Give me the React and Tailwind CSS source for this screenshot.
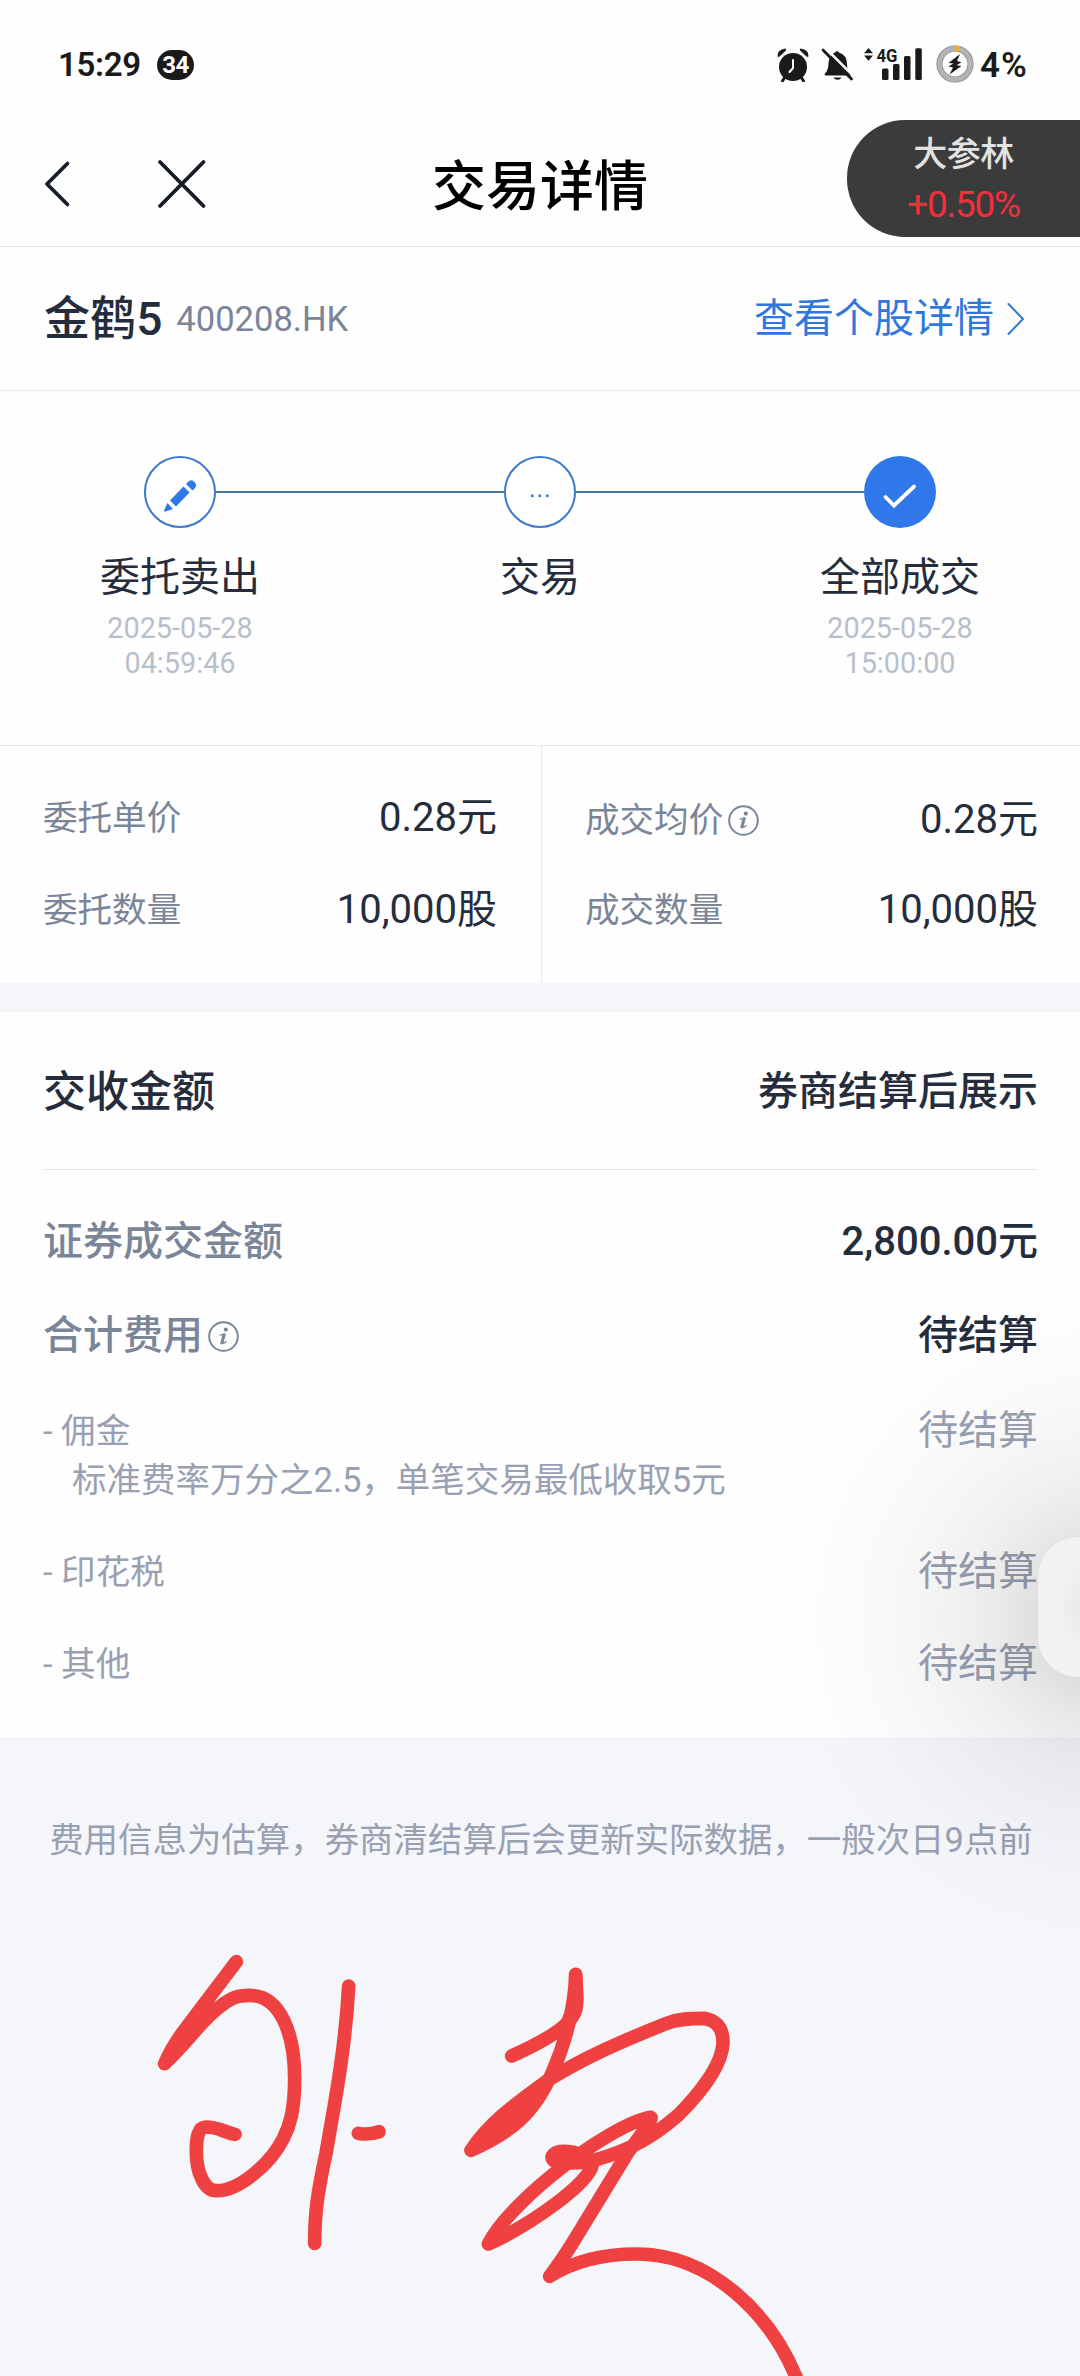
import React from 'react';

const steps = [
    { label: '委托卖出', icon: 'pencil', date: '2025-05-28', time: '04:59:46' },
    { label: '交易', icon: 'dots' },
    { label: '全部成交', icon: 'check', date: '2025-05-28', time: '15:00:00' },
];

const InfoIcon = () => (
    <svg className="w-[31px] h-[31px] shrink-0" viewBox="0 0 31 31" fill="none">
        <circle cx="15.5" cy="15.5" r="14.3" stroke="#7a869a" strokeWidth="2" />
        <circle cx="17.8" cy="8.6" r="2.1" fill="#7a869a" />
        <path d="M12.2 14.2L17.2 13.2L14.8 21.6Q14.6 23 16 22.2L18 20.4" stroke="#7a869a" strokeWidth="1.3" strokeLinejoin="round" strokeLinecap="round" />
        <path d="M15.9 13.6L13.7 22" stroke="#7a869a" strokeWidth="2.8" strokeLinecap="round" />
    </svg>
);

const StatusBar = () => (
    <div className="h-[120px] flex items-start justify-between pl-[58px] pr-[50px] text-[#1a1a1a]">
        <div className="flex items-center h-[30px] mt-[50px]">
            <span className="font-['Roboto'] font-semibold text-[33px] leading-[30px] w-[83px] tracking-[-0.3px]">15:29</span>
            <span className="ml-4 w-[37px] h-[30px] rounded-[15px] bg-[#1a1a1a] text-white font-['Roboto'] font-bold text-[24px] leading-[31px] text-center tracking-[-0.5px]">34</span>
        </div>
        <div className="flex items-start mt-[46px]">
            <svg className="w-[34px] h-[36px]" viewBox="0 0 34 36">
                <circle cx="17" cy="21" r="14" fill="#1a1a1a" />
                <path d="M1.5 10.5Q1 3.500 9.500 2.500Q10.500 3.200 10 4.500L3.500 10.500Q2.300 11.300 1.500 10.500Z M32.500 10.500Q33 3.500 24.500 2.500Q23.500 3.200 24 4.500L30.500 10.500Q31.700 11.300 32.500 10.500Z" fill="#1a1a1a" />
                <path d="M9 31L6.500 35M25 31L27.500 35" stroke="#1a1a1a" strokeWidth="3" strokeLinecap="round" />
                <path d="M17 14V22L13.500 26" stroke="#fff" strokeWidth="2" fill="none" strokeLinecap="round" />
            </svg>
            <svg className="w-[34px] h-[36px] ml-[11px]" viewBox="0 0 34 36">
                <path d="M4.500 29.500Q3 29.500 4 27.500Q7.500 24 7.500 17Q8 9 14 6.500Q16 3.500 18 6.500Q26 9 26 18Q26 24 28.500 26.500L30 28.500V29.500Z" fill="#1a1a1a" />
                <path d="M12.500 31.500H20.500Q19.500 33.800 16.500 33.800Q13.500 33.800 12.500 31.500Z" fill="#1a1a1a" />
                <path d="M4.500 2.200L34 31.500" stroke="#fff" strokeWidth="2.500" />
                <path d="M2 4L30.500 33" stroke="#1a1a1a" strokeWidth="2.800" strokeLinecap="round" />
            </svg>
            <svg className="w-[62px] h-[36px] ml-[8px] overflow-visible" viewBox="0 0 62 36">
                <path d="M1 7.200L5.500 2L10 7.200Z M1 9.500L5.500 14.700L10 9.500Z" fill="#1a1a1a" />
                <text x="13.500" y="16.300" textLength="21" lengthAdjust="spacingAndGlyphs" fontFamily="Roboto, sans-serif" fontWeight="700" fontSize="19" fill="#1a1a1a">4G</text>
                <rect x="19" y="22.500" width="6.500" height="11.500" rx="1.500" fill="#1a1a1a" />
                <rect x="30" y="18" width="6.500" height="16" rx="1.500" fill="#1a1a1a" />
                <rect x="41" y="10" width="6.500" height="24" rx="1.500" fill="#1a1a1a" />
                <rect x="52.300" y="2.200" width="6.500" height="31.800" rx="1.500" fill="#1a1a1a" />
            </svg>
            <svg className="w-[38px] h-[38px] ml-[11px] -mt-px" viewBox="0 0 38 38">
                <circle cx="19" cy="19" r="15.500" stroke="#8f8f8f" strokeWidth="6.200" fill="none" />
                <circle cx="19" cy="19" r="15.500" stroke="#b3b3b3" strokeWidth="4.600" fill="none" />
                <path d="M19 3.500A15.500 15.500 0 0 1 23 4" stroke="#f5ac1c" strokeWidth="6" fill="none" />
                <path d="M24 9L12.500 18L17.500 18.500L12.500 21.500L17 22.500L13.500 29.500L25.500 21L20.500 20.300L25.500 17.200L21 16Z" fill="#1a1a1a" />
            </svg>
            <span className="ml-[6px] mt-[5px] w-[50px] font-['Roboto'] font-semibold text-[35px] leading-[30px] tracking-[1px]">4%</span>
        </div>
    </div>
);

const NavBar = () => (
    <div className="h-[127px] flex items-start justify-between border-b border-[#e3e4e6]">
        <div className="flex w-[233px] pl-[43px] pt-[39px]">
            <svg className="w-7 h-[50px]" viewBox="0 0 28 50" fill="none">
                <path d="M24.500 4.500L4 25L24.500 45.500" stroke="#151c26" strokeWidth="3.800" strokeLinecap="round" strokeLinejoin="round" />
            </svg>
            <svg className="w-[50px] h-[50px] ml-[86px]" viewBox="0 0 50 50" fill="none">
                <path d="M3 3L46.500 47M46.500 3L3 47" stroke="#151c26" strokeWidth="3.800" strokeLinecap="round" />
            </svg>
        </div>
        <h1 className="pt-[41px] text-[54px] leading-[54px] font-medium text-black">交易详情</h1>
        <div className="w-[233px] h-[117px] rounded-l-[58px] bg-[#3b3b3b] pt-[17px] flex flex-col items-center">
            <span className="text-[34px] leading-[34px] tracking-[-0.5px] font-medium text-[#e2e2e2]">大参林</span>
            <span className="mt-[17px] text-[37px] leading-[34px] tracking-[-1.3px] text-[#f52e3c]">+0.50%</span>
        </div>
    </div>
);

const StepIcon = ({ type }) => {
    if (type === 'check') {
        return (
            <svg className="w-[72px] h-[72px]" viewBox="0 0 72 72" fill="none">
                <circle cx="36" cy="36" r="36" fill="#3077ea" />
                <path d="M21.500 41L30 49.500L50 30.500" stroke="#fff" strokeWidth="3.800" strokeLinecap="round" />
            </svg>
        );
    }
    return (
        <svg className="w-[72px] h-[72px]" viewBox="0 0 72 72">
            <circle cx="36" cy="36" r="35" stroke="#3b79d0" strokeWidth="2" fill="#fff" />
            {type === 'pencil' ? (
                <g fill="#3077ea">
                    <path d="M23.500 47L29 53L21.500 55.500Q19.500 56 20.200 54Z" />
                    <path d="M26 44.500L39.500 30.500L45.500 36.500L32 50.500Z" />
                    <path d="M42 28L44.500 25.500Q47.500 23 50.500 26Q53.500 29 51 32L48.500 34.500Z" />
                </g>
            ) : (
                <g fill="#3077d0">
                    <rect x="27" y="38.500" width="2.600" height="2.600" />
                    <rect x="34.500" y="38.500" width="2.600" height="2.600" />
                    <rect x="42" y="38.500" width="2.600" height="2.600" />
                </g>
            )}
        </svg>
    );
};

const Steps = () => (
    <div className="h-[355px] pt-[65px] flex border-b border-[#e6e7e9]">
        {steps.map((step, i) => (
            <div key={step.label} className="w-[360px] flex flex-col items-center">
                <div className="w-full flex items-center">
                    <div className={i === 0 ? 'flex-1 h-[2px]' : 'flex-1 h-[2px] bg-[#4576a0]'}></div>
                    <StepIcon type={step.icon} />
                    <div className={i === 2 ? 'flex-1 h-[2px]' : 'flex-1 h-[2px] bg-[#4576a0]'}></div>
                </div>
                <p className="mt-[30px] text-[40px] leading-[40px] text-[#252d3d]">{step.label}</p>
                {step.date && (
                    <p className="mt-[13px] text-[28.8px] leading-[35px] text-center text-[#b8bfcc]">
                        {step.date}<br />{step.time}
                    </p>
                )}
            </div>
        ))}
    </div>
);

const OrderRow = ({ label, value, info }) => (
    <div className="flex items-center justify-between h-[40px]">
        <span className="flex items-center text-[34.56px] leading-[40px] text-[#7b8598]">
            {label}
            {info && <span className="ml-[5px]"><InfoIcon /></span>}
        </span>
        <span className="text-[40px] leading-[40px] text-[#252d3d]">{value}</span>
    </div>
);

const FeeRow = ({ label, value }) => (
    <div className="flex items-center justify-between h-[40px] text-[#98a0b2]">
        <span className="text-[34.56px] leading-[40px]">{label}</span>
        <span className="text-[40px] leading-[40px]">{value}</span>
    </div>
);

// Red pen marks drawn over the empty area
const PenMarks = () => (
    <svg className="block w-[1080px] h-[456px] shrink-0" viewBox="0 0 1080 456" fill="none" stroke="#ef4141" strokeLinecap="round" strokeLinejoin="round">
        <g transform="translate(130 0) scale(0.33333)" strokeWidth="41">
            <path d="M319 125L160 335Q125 382 104 431C175 362 205 315 255 272C305 229 325 226 360 226C450 226 494 340 494 475C494 575 478 620 460 655C420 735 325 812 262 812C222 814 199 755 199 695C199 655 203 622 228 621C265 621 280 636 315 643" />
            <path d="M656 198C646 390 612 560 588 700C562 820 554 880 554 970" />
            <path d="M685 640Q715 646 747 635" />
        </g>
        <g transform="translate(430 0) scale(0.33333)" strokeWidth="41">
            <path d="M245 408C325 372 370 345 400 320C452 275 440 255 437 163C435 260 405 370 370 450C310 590 235 640 123 691C180 605 260 550 355 480C460 415 560 370 710 310C745 296 780 295 822 295C865 303 879 330 879 368C876 440 800 530 745 585C670 650 600 690 505 717C460 730 410 732 372 722C356 710 375 694 400 694C440 694 475 710 487 735C475 790 310 910 175 972C210 900 320 800 400 739C470 685 590 605 662 592C672 598 610 675 595 695L430 965Q400 1015 359 1069C440 1018 525 1002 620 1002C840 1002 1020 1180 1100 1375" />
            <path d="M380 709L480 722M160 655L320 520M180 640L270 585M437 170L440 240L412 310" />
        </g>
    </svg>
);

const App = () => {
    return (
        <div className="relative w-[1080px] h-[2376px] overflow-hidden flex flex-col bg-[#f4f6fa] font-['Roboto','Noto_Sans_CJK_SC',sans-serif] whitespace-nowrap">
            <div className="h-[983px] shrink-0 bg-[#fefefe]">
                <StatusBar />
                <NavBar />
                <div className="h-[144px] flex items-center justify-between pl-[44px] pr-[55px] border-b border-[#e8e9eb]">
                    <div className="flex items-center">
                        <span className="text-[46.08px] leading-[46px] font-medium text-[#252d3d]">金鹤5</span>
                        <span className="ml-[14px] text-[34.56px] leading-[46px] text-[#7b8598]">400208.HK</span>
                    </div>
                    <div className="flex items-center text-[#2f77dd]">
                        <span className="pt-px text-[40px] leading-[46px]">查看个股详情</span>
                        <svg className="w-[18px] h-[34px] ml-[13px]" viewBox="0 0 18 34" fill="none">
                            <path d="M1.500 2L16 17L1.500 32" stroke="#2f77dd" strokeWidth="2" strokeLinecap="round" />
                        </svg>
                    </div>
                </div>
                <Steps />
                <div className="flex h-[237px]">
                    <div className="w-[541px] pt-[52px] pl-[43px] pr-[44px] flex flex-col gap-[52px]">
                        <OrderRow label="委托单价" value="0.28元" />
                        <OrderRow label="委托数量" value="10,000股" />
                    </div>
                    <div className="w-[539px] pt-[54px] pl-[43px] pr-[42px] flex flex-col gap-[50px] border-l border-[#e6e7e9]">
                        <OrderRow label="成交均价" value="0.28元" info />
                        <OrderRow label="成交数量" value="10,000股" />
                    </div>
                </div>
            </div>

            <div className="mt-[29px] h-[725px] shrink-0 bg-[#fefefe] pl-[43px] pr-[42px]">
                <div className="h-[158px] pt-[2px] flex items-center justify-between border-b border-[#e6e7e9] font-medium text-[#252d3d]">
                    <span className="text-[43px] leading-[44px]">交收金额</span>
                    <span className="text-[40px] leading-[44px]">券商结算后展示</span>
                </div>
                <div className="mt-[52px] h-[40px] flex items-center justify-between text-[40px] leading-[40px] font-medium">
                    <span className="text-[#7b8598]">证券成交金额</span>
                    <span className="text-[#252d3d]">2,800.00元</span>
                </div>
                <div className="mt-[54px] h-[40px] flex items-center justify-between text-[40px] leading-[40px] font-medium">
                    <span className="flex items-center gap-[5px] text-[#7b8598]">合计费用<InfoIcon /></span>
                    <span className="text-[#252d3d]">待结算</span>
                </div>
                <div className="mt-[55px]">
                    <FeeRow label="- 佣金" value="待结算" />
                    <p className="mt-[9px] pl-[29px] text-[34.5px] leading-[40px] text-[#98a0b2]">标准费率万分之2.5，单笔交易最低收取5元</p>
                </div>
                <div className="mt-[52px] flex flex-col gap-[52px]">
                    <FeeRow label="- 印花税" value="待结算" />
                    <FeeRow label="- 其他" value="待结算" />
                </div>
            </div>

            <p className="mt-[83px] mb-[60px] pl-[2px] text-center text-[34.45px] leading-[40px] text-[#98a0b2]">费用信息为估算，券商清结算后会更新实际数据，一般次日9点前</p>
            <PenMarks />

            {/* floating side handle and its shadow */}
            <div className="absolute top-[1275px] right-0 w-[300px] h-[700px] bg-[radial-gradient(circle_325px_at_328px_345px,rgba(0,0,0,0.12)_22%,rgba(0,0,0,0.085)_32%,rgba(0,0,0,0.055)_45%,rgba(0,0,0,0.03)_60%,rgba(0,0,0,0.01)_80%,rgba(0,0,0,0)_100%)]"></div>
            <div className="absolute top-[1537px] -right-[98px] w-[140px] h-[140px] rounded-[40px] bg-[radial-gradient(circle_at_center,#e9e9e9_25%,#ededed_38%,#f2f2f2_52%)]"></div>
        </div>
    );
};

export default App;
